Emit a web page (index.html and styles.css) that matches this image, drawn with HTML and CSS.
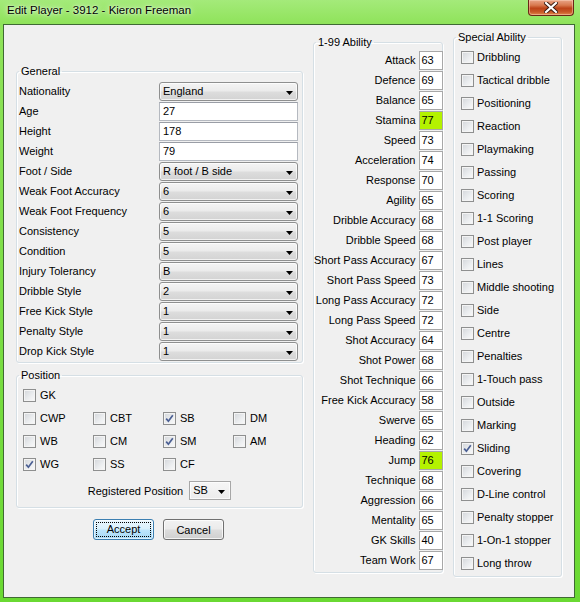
FILE: index.html
```html
<!DOCTYPE html>
<html>
<head>
<meta charset="utf-8">
<title>Edit Player</title>
<link rel="stylesheet" href="styles.css">
</head>
<body>
<div class="window">
  <div class="titlebar">
    <span class="title">Edit Player - 3912 - Kieron Freeman</span>
    <div class="close">
      <svg width="14" height="11" viewBox="0 0 14 11"><path d="M2 1 L12 10 M12 1 L2 10" stroke="#3a1a10" stroke-width="4" stroke-linecap="square"/><path d="M2 1 L12 10 M12 1 L2 10" stroke="#fff" stroke-width="2.2" stroke-linecap="square"/></svg>
    </div>
  </div>
  <div class="client">
    <div class="col-left">
      <fieldset class="group general">
        <legend>General</legend>
        <div class="form">
          <span class="lbl">Nationality</span><div class="combo"><span>England</span><svg class="arrow" width="7" height="4" viewBox="0 0 7 4"><path d="M0 0H7L3.5 4Z" fill="#000"/></svg></div>
          <span class="lbl">Age</span><div class="input">27</div>
          <span class="lbl">Height</span><div class="input">178</div>
          <span class="lbl">Weight</span><div class="input">79</div>
          <span class="lbl">Foot / Side</span><div class="combo"><span>R foot / B side</span><svg class="arrow" width="7" height="4" viewBox="0 0 7 4"><path d="M0 0H7L3.5 4Z" fill="#000"/></svg></div>
          <span class="lbl">Weak Foot Accuracy</span><div class="combo"><span>6</span><svg class="arrow" width="7" height="4" viewBox="0 0 7 4"><path d="M0 0H7L3.5 4Z" fill="#000"/></svg></div>
          <span class="lbl">Weak Foot Frequency</span><div class="combo"><span>6</span><svg class="arrow" width="7" height="4" viewBox="0 0 7 4"><path d="M0 0H7L3.5 4Z" fill="#000"/></svg></div>
          <span class="lbl">Consistency</span><div class="combo"><span>5</span><svg class="arrow" width="7" height="4" viewBox="0 0 7 4"><path d="M0 0H7L3.5 4Z" fill="#000"/></svg></div>
          <span class="lbl">Condition</span><div class="combo"><span>5</span><svg class="arrow" width="7" height="4" viewBox="0 0 7 4"><path d="M0 0H7L3.5 4Z" fill="#000"/></svg></div>
          <span class="lbl">Injury Tolerancy</span><div class="combo"><span>B</span><svg class="arrow" width="7" height="4" viewBox="0 0 7 4"><path d="M0 0H7L3.5 4Z" fill="#000"/></svg></div>
          <span class="lbl">Dribble Style</span><div class="combo"><span>2</span><svg class="arrow" width="7" height="4" viewBox="0 0 7 4"><path d="M0 0H7L3.5 4Z" fill="#000"/></svg></div>
          <span class="lbl">Free Kick Style</span><div class="combo"><span>1</span><svg class="arrow" width="7" height="4" viewBox="0 0 7 4"><path d="M0 0H7L3.5 4Z" fill="#000"/></svg></div>
          <span class="lbl">Penalty Style</span><div class="combo"><span>1</span><svg class="arrow" width="7" height="4" viewBox="0 0 7 4"><path d="M0 0H7L3.5 4Z" fill="#000"/></svg></div>
          <span class="lbl">Drop Kick Style</span><div class="combo"><span>1</span><svg class="arrow" width="7" height="4" viewBox="0 0 7 4"><path d="M0 0H7L3.5 4Z" fill="#000"/></svg></div>
        </div>
      </fieldset>

      <fieldset class="group position">
        <legend>Position</legend>
        <div class="pos-body">
          <div class="pos-grid">
            <label class="chk"><span class="box"></span>GK</label>
            <span></span><span></span><span></span>
            <label class="chk"><span class="box"></span>CWP</label>
            <label class="chk"><span class="box"></span>CBT</label>
            <label class="chk"><span class="box on"><svg width="11" height="11" viewBox="0 0 11 11"><path d="M2.2 5.6 L4.4 8.2 L8.8 2.2" fill="none" stroke="#4b5f93" stroke-width="1.7"/></svg></span>SB</label>
            <label class="chk"><span class="box"></span>DM</label>
            <label class="chk"><span class="box"></span>WB</label>
            <label class="chk"><span class="box"></span>CM</label>
            <label class="chk"><span class="box on"><svg width="11" height="11" viewBox="0 0 11 11"><path d="M2.2 5.6 L4.4 8.2 L8.8 2.2" fill="none" stroke="#4b5f93" stroke-width="1.7"/></svg></span>SM</label>
            <label class="chk"><span class="box"></span>AM</label>
            <label class="chk"><span class="box on"><svg width="11" height="11" viewBox="0 0 11 11"><path d="M2.2 5.6 L4.4 8.2 L8.8 2.2" fill="none" stroke="#4b5f93" stroke-width="1.7"/></svg></span>WG</label>
            <label class="chk"><span class="box"></span>SS</label>
            <label class="chk"><span class="box"></span>CF</label>
            <span></span>
          </div>
          <div class="reg-row">
            <span>Registered Position</span>
            <div class="combo flat"><span>SB</span><svg class="arrow" width="7" height="4" viewBox="0 0 7 4"><path d="M0 0H7L3.5 4Z" fill="#000"/></svg></div>
          </div>
        </div>
      </fieldset>

      <div class="buttons">
        <button class="btn default"><span>Accept</span></button>
        <button class="btn">Cancel</button>
      </div>
    </div>

    <fieldset class="group ability">
      <legend>1-99 Ability</legend>
      <div class="ab-grid">
        <span class="ab-l">Attack</span><span class="ab-v">63</span>
        <span class="ab-l">Defence</span><span class="ab-v">69</span>
        <span class="ab-l">Balance</span><span class="ab-v">65</span>
        <span class="ab-l">Stamina</span><span class="ab-v hi">77</span>
        <span class="ab-l">Speed</span><span class="ab-v">73</span>
        <span class="ab-l">Acceleration</span><span class="ab-v">74</span>
        <span class="ab-l">Response</span><span class="ab-v">70</span>
        <span class="ab-l">Agility</span><span class="ab-v">65</span>
        <span class="ab-l">Dribble Accuracy</span><span class="ab-v">68</span>
        <span class="ab-l">Dribble Speed</span><span class="ab-v">68</span>
        <span class="ab-l">Short Pass Accuracy</span><span class="ab-v">67</span>
        <span class="ab-l">Short Pass Speed</span><span class="ab-v">73</span>
        <span class="ab-l">Long Pass Accuracy</span><span class="ab-v">72</span>
        <span class="ab-l">Long Pass Speed</span><span class="ab-v">72</span>
        <span class="ab-l">Shot Accuracy</span><span class="ab-v">64</span>
        <span class="ab-l">Shot Power</span><span class="ab-v">68</span>
        <span class="ab-l">Shot Technique</span><span class="ab-v">66</span>
        <span class="ab-l">Free Kick Accuracy</span><span class="ab-v">58</span>
        <span class="ab-l">Swerve</span><span class="ab-v">65</span>
        <span class="ab-l">Heading</span><span class="ab-v">62</span>
        <span class="ab-l">Jump</span><span class="ab-v hi">76</span>
        <span class="ab-l">Technique</span><span class="ab-v">68</span>
        <span class="ab-l">Aggression</span><span class="ab-v">66</span>
        <span class="ab-l">Mentality</span><span class="ab-v">65</span>
        <span class="ab-l">GK Skills</span><span class="ab-v">40</span>
        <span class="ab-l">Team Work</span><span class="ab-v">67</span>
      </div>
    </fieldset>

    <fieldset class="group special">
      <legend>Special Ability</legend>
      <div class="sp-list">
        <label class="chk"><span class="box"></span>Dribbling</label>
        <label class="chk"><span class="box"></span>Tactical dribble</label>
        <label class="chk"><span class="box"></span>Positioning</label>
        <label class="chk"><span class="box"></span>Reaction</label>
        <label class="chk"><span class="box"></span>Playmaking</label>
        <label class="chk"><span class="box"></span>Passing</label>
        <label class="chk"><span class="box"></span>Scoring</label>
        <label class="chk"><span class="box"></span>1-1 Scoring</label>
        <label class="chk"><span class="box"></span>Post player</label>
        <label class="chk"><span class="box"></span>Lines</label>
        <label class="chk"><span class="box"></span>Middle shooting</label>
        <label class="chk"><span class="box"></span>Side</label>
        <label class="chk"><span class="box"></span>Centre</label>
        <label class="chk"><span class="box"></span>Penalties</label>
        <label class="chk"><span class="box"></span>1-Touch pass</label>
        <label class="chk"><span class="box"></span>Outside</label>
        <label class="chk"><span class="box"></span>Marking</label>
        <label class="chk"><span class="box on"><svg width="11" height="11" viewBox="0 0 11 11"><path d="M2.2 5.6 L4.4 8.2 L8.8 2.2" fill="none" stroke="#4b5f93" stroke-width="1.7"/></svg></span>Sliding</label>
        <label class="chk"><span class="box"></span>Covering</label>
        <label class="chk"><span class="box"></span>D-Line control</label>
        <label class="chk"><span class="box"></span>Penalty stopper</label>
        <label class="chk"><span class="box"></span>1-On-1 stopper</label>
        <label class="chk"><span class="box"></span>Long throw</label>
      </div>
    </fieldset>
  </div>
</div>
</body>
</html>
```

FILE: styles.css
```css
* { box-sizing: border-box; }
html, body { margin: 0; padding: 0; }
body {
  width: 580px;
  height: 602px;
  overflow: hidden;
  font-family: "Liberation Sans", Arial, sans-serif;
  font-size: 11px;
  color: #000;
}
.window {
  width: 580px;
  height: 602px;
  display: flex;
  flex-direction: column;
  background: linear-gradient(180deg, #a4ea7a 0px, #8fe35a 24px, #7cde45 300px, #6ad932 602px);
}
.titlebar {
  height: 24px;
  display: flex;
  justify-content: space-between;
  align-items: flex-start;
  padding-left: 7px;
  padding-right: 6px;
  flex: none;
}
.title {
  font-size: 11.5px;
  line-height: 14px;
  padding-top: 3px;
  text-shadow: 0 0 6px rgba(255,255,255,0.9), 0 0 2px rgba(255,255,255,0.8);
}
.close {
  width: 46px;
  height: 16px;
  border: 1px solid #6b2614;
  border-top: none;
  border-radius: 0 0 4px 4px;
  background: linear-gradient(180deg, #e9a487 0%, #d8794f 35%, #bd4318 55%, #c85a28 80%, #e08a4d 100%);
  box-shadow: inset 0 0 0 1px rgba(255,220,200,0.45);
  display: flex;
  align-items: center;
  justify-content: center;
}
.client {
  flex: none;
  margin-left: 3px;
  width: 572px;
  height: 574px;
  border: 1px solid #3f6a34;
  background: #f0f0f0;
  display: flex;
  align-items: flex-start;
  padding-left: 12px;
  gap: 10px;
}
.col-left {
  width: 287px;
  margin-top: 40px;
  display: flex;
  flex-direction: column;
}
.group {
  margin: 0;
  padding: 0;
  min-width: 0;
  border: 1px solid #d5dfe5;
  border-radius: 3px;
  box-shadow: inset 1px 1px 0 #fff, 1px 1px 0 #fff;
}
.group legend {
  margin-left: 2px;
  padding: 0 2px;
  line-height: 13px;
  font-size: 11px;
}
.general { width: 287px; }
.form {
  display: grid;
  grid-template-columns: 140px 139px;
  grid-auto-rows: 20px;
  padding: 3px 4px 1px 2px;
}
.lbl { line-height: 20px; white-space: nowrap; }
.combo, .input {
  margin-top: 1px;
  height: 19px;
  display: flex;
  align-items: center;
  padding-left: 3px;
  line-height: 17px;
}
.combo {
  justify-content: space-between;
  padding-right: 4px;
  border: 1px solid #8e8f8f;
  border-radius: 3px;
  background: linear-gradient(180deg, #f4f4f4 0%, #ebebeb 48%, #dddddd 52%, #d3d3d3 100%);
  box-shadow: inset 0 0 0 1px rgba(255,255,255,0.7);
}
.combo .arrow { margin-top: 2px; flex: none; }
.input {
  background: #fff;
  border: 1px solid #b5b9c0;
  border-top-color: #9a9ea6;
}
.position {
  width: 287px;
  margin-top: 6px;
}
.pos-body { padding: 2px 4px 7px 6px; }
.pos-grid {
  display: grid;
  grid-template-columns: repeat(4, 70px);
  grid-auto-rows: 23px;
}
.chk {
  display: flex;
  align-items: center;
  gap: 4px;
  white-space: nowrap;
  line-height: 13px;
}
.box {
  flex: none;
  width: 13px;
  height: 13px;
  border: 1px solid #8e8f8f;
  background: linear-gradient(135deg, #d3d6da 0%, #eceef0 60%, #fafafa 100%);
  box-shadow: inset 0 0 0 1px #f4f4f4;
  display: flex;
  align-items: center;
  justify-content: center;
}
.reg-row {
  margin-top: 5px;
  height: 19px;
  display: flex;
  justify-content: center;
  align-items: center;
  gap: 6px;
  padding-right: 2px;
}
.combo.flat {
  margin-top: 0;
  width: 42px;
  border-radius: 0;
  border-color: #a7a7a7;
  background: linear-gradient(180deg, #f6f6f6 0%, #ececec 100%);
  padding-right: 5px;
}
.buttons {
  margin-top: 11px;
  display: flex;
  justify-content: center;
  gap: 9px;
  padding-right: 2px;
}
.btn {
  width: 61px;
  height: 21px;
  padding: 0;
  font-family: "Liberation Sans", Arial, sans-serif;
  font-size: 11px;
  color: #000;
  border: 1px solid #707070;
  border-radius: 3px;
  background: linear-gradient(180deg, #f2f2f2 0%, #ebebeb 48%, #dddddd 52%, #cfcfcf 100%);
  box-shadow: inset 0 0 0 1px rgba(255,255,255,0.75);
}
.btn.default {
  border-color: #3c7fb1;
  background: linear-gradient(180deg, #eaf6fd 0%, #d9f0fc 48%, #bee6fd 52%, #a7d9f5 100%);
  box-shadow: inset 0 0 0 1px rgba(255,255,255,0.6);
  display: flex;
  align-items: center;
  justify-content: center;
}
.btn.default span {
  display: block;
  width: 55px;
  height: 15px;
  line-height: 13px;
  border: 1px dotted #000;
}
.ability {
  width: 130px;
  margin-top: 11px;
}
.ab-grid {
  display: grid;
  grid-template-columns: 1fr 24px;
  column-gap: 3px;
  grid-auto-rows: 20px;
  padding: 1px 2px 2px 0;
}
.ab-l {
  text-align: right;
  line-height: 20px;
  white-space: nowrap;
}
.ab-v {
  margin-top: 1px;
  height: 19px;
  line-height: 17px;
  padding-left: 2px;
  background: #fff;
  border: 1px solid #a8a8a8;
}
.ab-v.hi { background: #b4f200; }
.special {
  width: 109px;
  margin-top: 6px;
}
.sp-list {
  display: flex;
  flex-direction: column;
  padding: 2px 0 1px 7px;
}
.sp-list .chk { height: 23px; gap: 3px; }
```
